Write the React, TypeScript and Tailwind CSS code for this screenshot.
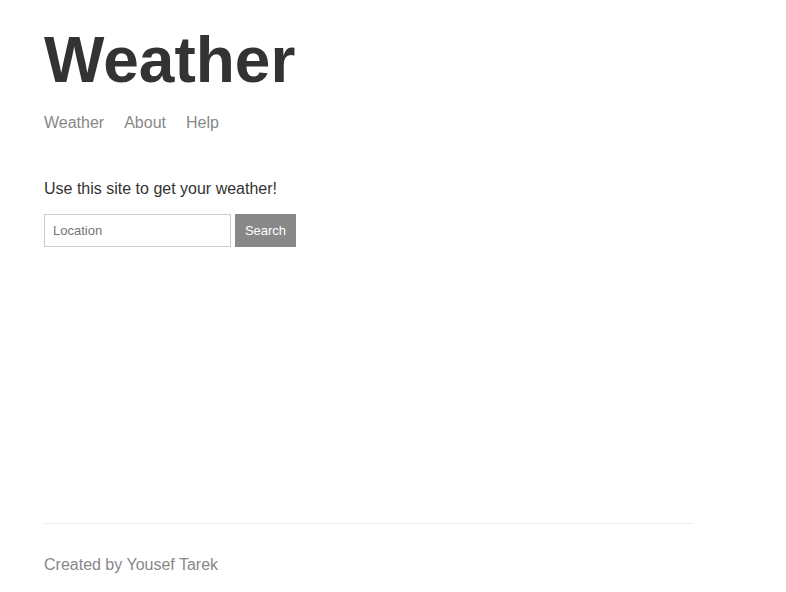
import React from 'react'

export default function App() {
  const links = ['Weather', 'About', 'Help']
  return (
    <div className="min-h-screen bg-white" style={{ fontFamily: '"Liberation Sans", Arial, sans-serif' }}>
      <div className="ml-[44px] w-[650px] min-h-screen flex flex-col">
        <main className="flex-grow">
          <header className="pt-[23px]">
            <h1 className="text-[64px] leading-[74px] font-bold text-[#333]">Weather</h1>
            <nav className="mt-[17px] flex gap-[20px] text-[16px] leading-[18px] text-[#888]">
              {links.map((l) => (
                <a key={l} href="#">{l}</a>
              ))}
            </nav>
          </header>
          <p className="mt-[48px] text-[16px] leading-[18px] text-[#333]">Use this site to get your weather!</p>
          <form className="mt-[16px] flex gap-[4px]">
            <input
              placeholder="Location"
              className="w-[187px] h-[33px] border border-[#ccc] px-[8px] text-[13px] text-[#333] placeholder:text-[#757575] outline-none"
            />
            <button type="button" className="w-[61px] h-[33px] bg-[#888] text-white text-[13px]">
              Search
            </button>
          </form>
        </main>
        <footer className="border-t border-[#eee] pt-[32px] pb-[18px] text-[16px] leading-[18px] text-[#888]">
          Created by Yousef Tarek
        </footer>
      </div>
    </div>
  )
}
